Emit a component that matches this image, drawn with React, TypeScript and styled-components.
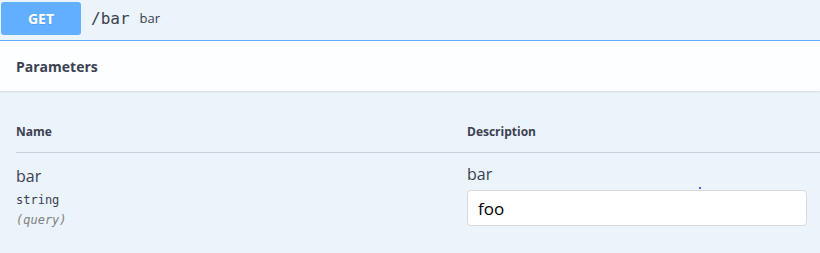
import React from 'react';
import styled, { createGlobalStyle } from 'styled-components';

const Global = createGlobalStyle`
  body {
    margin: 0;
    background: #ebf3fb;
    font-family: "Open Sans", "Liberation Sans", sans-serif;
    color: #3b4151;
  }
`;

const Block = styled.div`
  width: 820px;
  height: 253px;
  background: #ebf3fb;
  position: relative;
  overflow: hidden;
`;

const Summary = styled.div`
  display: flex;
  align-items: flex-start;
  height: 41px;
  box-sizing: border-box;
  padding: 2px 0 0 1px;
  border-bottom: 1px solid #61affe;
`;

const Method = styled.span`
  display: flex;
  align-items: center;
  justify-content: center;
  width: 80px;
  height: 33px;
  border-radius: 3px;
  background: #61affe;
  color: #fff;
  font-size: 14px;
  font-weight: 700;
  text-shadow: 0 1px 0 rgba(0, 0, 0, 0.1);
`;

const Path = styled.span`
  font-family: "DejaVu Sans Mono", monospace;
  font-size: 16px;
  line-height: 33px;
  padding: 0 10px;
`;

const Desc = styled.span`
  font-size: 13px;
  line-height: 33px;
`;

const SectionHeader = styled.div`
  display: flex;
  align-items: center;
  height: 50px;
  padding: 0 16px;
  background: rgba(255, 255, 255, 0.85);
  box-shadow: 0 1px 2px rgba(0, 0, 0, 0.1);
`;

const Title = styled.h4`
  margin: 0;
  font-size: 14px;
  font-weight: 700;
`;

const Table = styled.div`
  padding: 20px 0 0 16px;
`;

const Row = styled.div<{ $head?: boolean }>`
  display: grid;
  grid-template-columns: 451px 1fr;
  ${(p) => (p.$head ? 'border-bottom: 1px solid rgba(59, 65, 81, 0.2);' : '')}
`;

const Th = styled.div`
  padding: 12px 0 12px;
  font-size: 12px;
  font-weight: 700;
  line-height: 17px;
`;

const Cell = styled.div<{ $top: number }>`
  padding-top: ${(p) => p.$top}px;
`;

const ParamName = styled.div`
  font-size: 16px;
  line-height: 22px;
`;

const ParamType = styled.div`
  font-family: "DejaVu Sans Mono", monospace;
  font-size: 12px;
  font-weight: 500;
  line-height: 16px;
  margin-top: 5px;
`;

const ParamIn = styled.div`
  font-family: "DejaVu Sans Mono", monospace;
  font-size: 12px;
  font-style: italic;
  color: #808080;
  line-height: 16px;
  margin-top: 4px;
`;

const Input = styled.input`
  display: block;
  box-sizing: border-box;
  width: 340px;
  height: 36px;
  margin-top: 5px;
  padding: 0 10px;
  border: 1px solid #d9d9d9;
  border-radius: 4px;
  background: #fff;
  font-family: "Open Sans", sans-serif;
  font-size: 17px;
  color: #000;
  outline: none;
`;

const Dot = styled.span`
  position: absolute;
  left: 699px;
  top: 187px;
  width: 2px;
  height: 2px;
  border-radius: 1px;
  background: #2030e0;
`;

export default function App() {
  return (
    <Block>
      <Global />
      <Summary>
        <Method>GET</Method>
        <Path>/bar</Path>
        <Desc>bar</Desc>
      </Summary>
      <SectionHeader>
        <Title>Parameters</Title>
      </SectionHeader>
      <Table>
        <Row $head>
          <Th>Name</Th>
          <Th>Description</Th>
        </Row>
        <Row>
          <Cell $top={12}>
            <ParamName>bar</ParamName>
            <ParamType>string</ParamType>
            <ParamIn>(query)</ParamIn>
          </Cell>
          <Cell $top={10}>
            <ParamName>bar</ParamName>
            <Input defaultValue="foo" />
          </Cell>
        </Row>
      </Table>
      <Dot />
    </Block>
  );
}
